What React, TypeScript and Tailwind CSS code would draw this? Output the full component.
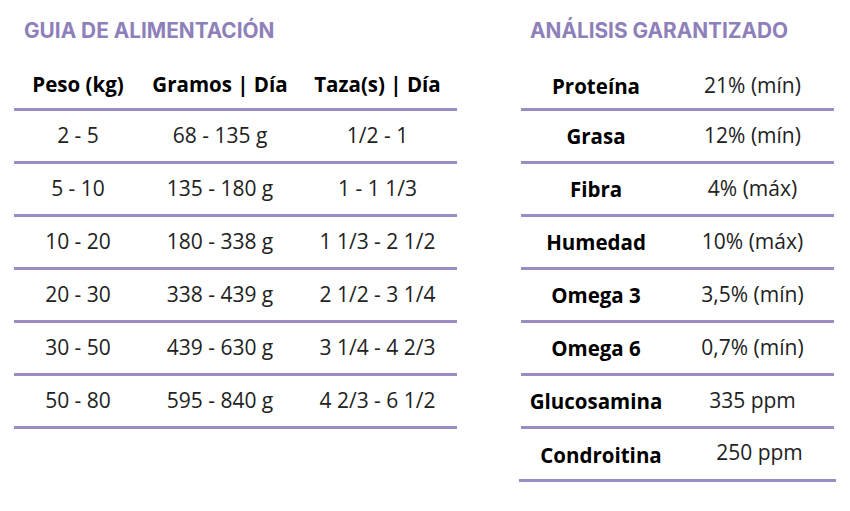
const feeding = [
  ["2 - 5", "68 - 135 g", "1/2 - 1"],
  ["5 - 10", "135 - 180 g", "1 - 1 1/3"],
  ["10 - 20", "180 - 338 g", "1 1/3 - 2 1/2"],
  ["20 - 30", "338 - 439 g", "2 1/2 - 3 1/4"],
  ["30 - 50", "439 - 630 g", "3 1/4 - 4 2/3"],
  ["50 - 80", "595 - 840 g", "4 2/3 - 6 1/2"],
];

const analysis = [
  ["Proteína", "21% (mín)"],
  ["Grasa", "12% (mín)"],
  ["Fibra", "4% (máx)"],
  ["Humedad", "10% (máx)"],
  ["Omega 3", "3,5% (mín)"],
  ["Omega 6", "0,7% (mín)"],
  ["Glucosamina", "335 ppm"],
  ["Condroitina", "250 ppm"],
];

const heading =
  "h-[21px] text-[20.8px] font-bold leading-[21px] text-[#8e80b9] [font-family:Inter,'Liberation_Sans',sans-serif]";

export default function App() {
  return (
    <div className="flex h-[511px] w-[850px] bg-white pt-[20px] text-[#1a1a1a] [font-family:'Open_Sans',sans-serif]">
      {/* feeding guide */}
      <section className="ml-[14px] w-[443px]">
        <h2 className={`${heading} pl-[10px]`}>GUIA DE ALIMENTACIÓN</h2>
        <div className="mt-[19px] grid h-[51px] grid-cols-[128px_156px_159px] items-center border-b-[3px] border-[#9a8dc5] text-center text-[20.5px] font-bold text-black">
          <span>Peso (kg)</span>
          <span>Gramos | Día</span>
          <span>Taza(s) | Día</span>
        </div>
        {feeding.map((row) => (
          <div
            key={row[0]}
            className="grid h-[53px] grid-cols-[128px_156px_159px] items-center border-b-[3px] border-[#9a8dc5] text-center text-[21px] text-[#222]"
          >
            {row.map((cell) => (
              <span key={cell}>{cell}</span>
            ))}
          </div>
        ))}
      </section>

      {/* guaranteed analysis */}
      <section className="ml-[64px] w-[313px]">
        <h2 className={`${heading} pl-[9px]`}>ANÁLISIS GARANTIZADO</h2>
        <div className="mt-[19px]">
          {analysis.map(([label, value], i) => {
            const last = i === analysis.length - 1;
            return (
              <div
                key={label}
                className={`grid items-center border-b-[3px] border-[#9a8dc5] text-center ${
                  i === 0 ? "h-[51px] pt-[4px]" : "h-[53px]"
                } ${last ? "-mx-[2px] grid-cols-[164px_153px] pt-[3px]" : "grid-cols-[150px_163px]"}`}
              >
                <span className="text-[20.5px] font-bold text-black">{label}</span>
                <span className={`text-[21px] text-[#222] ${last ? "-mt-[5px]" : ""}`}>{value}</span>
              </div>
            );
          })}
        </div>
      </section>
    </div>
  );
}
